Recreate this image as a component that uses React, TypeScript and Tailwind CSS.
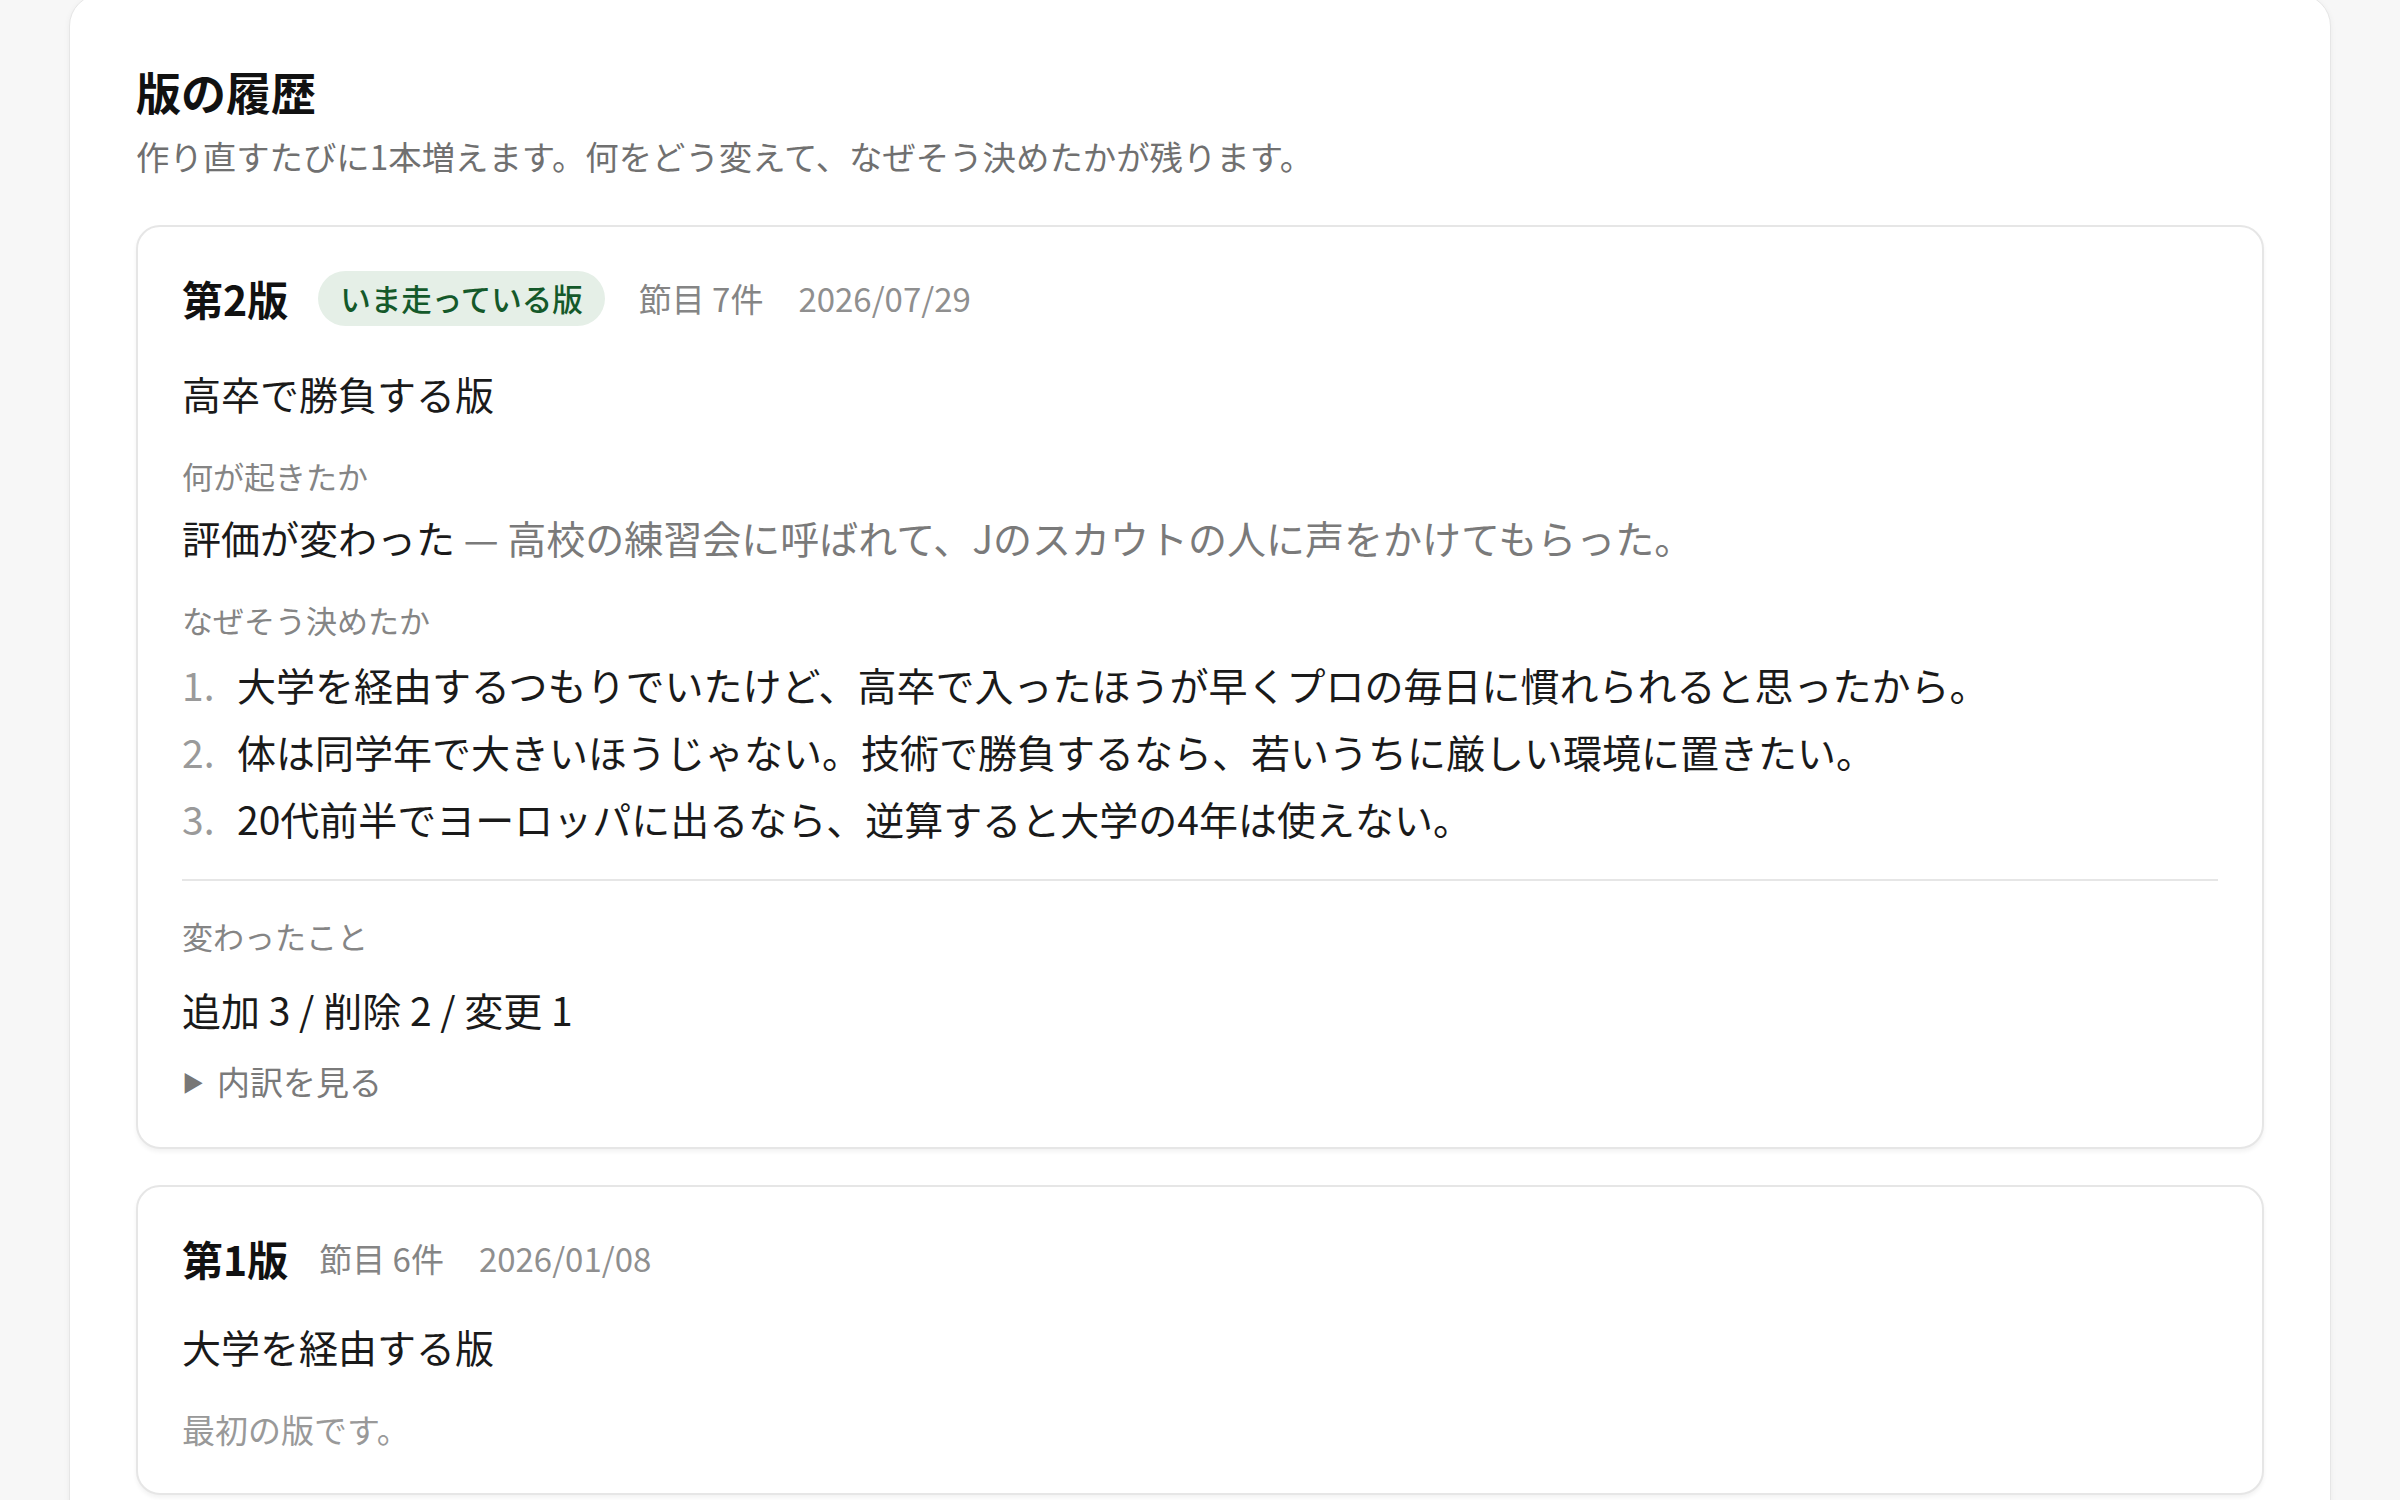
import type React from 'react'

const reasons = [
  '大学を経由するつもりでいたけど、高卒で入ったほうが早くプロの毎日に慣れられると思ったから。',
  '体は同学年で大きいほうじゃない。技術で勝負するなら、若いうちに厳しい環境に置きたい。',
  '20代前半でヨーロッパに出るなら、逆算すると大学の4年は使えない。',
]

const Label: React.FC<{ children: React.ReactNode; className?: string }> = ({ children, className = '' }) => (
  <div className={`text-[31px] leading-[44px] text-[#858585] ${className}`}>{children}</div>
)

const App: React.FC = () => {
  return (
    <div
      className="min-h-screen bg-[#f7f7f7] px-[69px] overflow-hidden"
      style={{ fontFamily: '"Noto Sans CJK JP", "Noto Sans", sans-serif' }}
    >
      {/* 外枠 */}
      <div className="-mt-[6px] bg-white border border-[#e6e6e6] rounded-[32px] shadow-[0_2px_6px_rgba(0,0,0,0.05)] px-[66px] pt-[67px] pb-[80px]">
        <h2 className="text-[45px] leading-[60px] font-bold text-[#111]">版の履歴</h2>
        <p className="mt-[10px] text-[33.4px] leading-[48px] text-[#707070]">
          作り直すたびに1本増えます。何をどう変えて、なぜそう決めたかが残ります。
        </p>

        {/* 第2版 */}
        <div className="mt-[45px] bg-white border-2 border-[#e6e6e6] rounded-[24px] shadow-[0_3px_4px_rgba(0,0,0,0.05)] px-[44px] pt-[44px] pb-[42px]">
          <div className="flex items-center h-[55px]">
            <span className="text-[41px] font-bold text-[#111]">第2版</span>
            <span className="ml-[30px] h-[55px] px-[22px] flex items-center rounded-full bg-[#e5efe7] text-[30.5px] font-medium text-[#14592a]">
              いま走っている版
            </span>
            <span className="ml-[34px] text-[33px] text-[#858585]">節目 7件</span>
            <span className="ml-[35px] text-[33px] text-[#8f8f8f]">2026/07/29</span>
          </div>

          <div className="mt-[37px] text-[39px] leading-[60px] text-[#1a1a1a]">高卒で勝負する版</div>

          <Label className="mt-[31px]">何が起きたか</Label>
          <div className="mt-[9px] text-[39px] leading-[60px] text-[#1a1a1a]">
            評価が変わった
            <span className="text-[#7a7a7a]"> — 高校の練習会に呼ばれて、Jのスカウトの人に声をかけてもらった。</span>
          </div>

          <Label className="mt-[31px]">なぜそう決めたか</Label>
          <ol className="mt-[12px] flex flex-col gap-[7px]">
            {reasons.map((r, i) => (
              <li key={i} className="flex text-[39px] leading-[60px] text-[#1a1a1a]">
                <span className="w-[55px] shrink-0 text-[#9a9a9a]">{i + 1}.</span>
                <span>{r}</span>
              </li>
            ))}
          </ol>

          <div className="mt-[31px] border-t-2 border-[#e6e6e6]" />

          <Label className="mt-[33px]">変わったこと</Label>
          <div className="mt-[21px] text-[39px] leading-[60px] text-[#1a1a1a]">追加 3 / 削除 2 / 変更 1</div>
          <div className="mt-[18px] flex items-center text-[33px] leading-[48px] text-[#7a7a7a]">
            <span className="text-[22px] mr-[13px] text-[#777]">▶</span>
            <span>内訳を見る</span>
          </div>
        </div>

        {/* 第1版 */}
        <div className="mt-[36px] bg-white border-2 border-[#e6e6e6] rounded-[24px] shadow-[0_3px_4px_rgba(0,0,0,0.05)] px-[44px] pt-[44px] pb-[42px]">
          <div className="flex items-center h-[55px]">
            <span className="text-[41px] font-bold text-[#111]">第1版</span>
            <span className="ml-[31px] text-[33px] text-[#858585]">節目 6件</span>
            <span className="ml-[35px] text-[33px] text-[#8f8f8f]">2026/01/08</span>
          </div>
          <div className="mt-[30px] text-[39px] leading-[60px] text-[#1a1a1a]">大学を経由する版</div>
          <div className="mt-[31px] text-[33px] leading-[44px] text-[#999]">最初の版です。</div>
        </div>
      </div>
    </div>
  )
}

export default App
